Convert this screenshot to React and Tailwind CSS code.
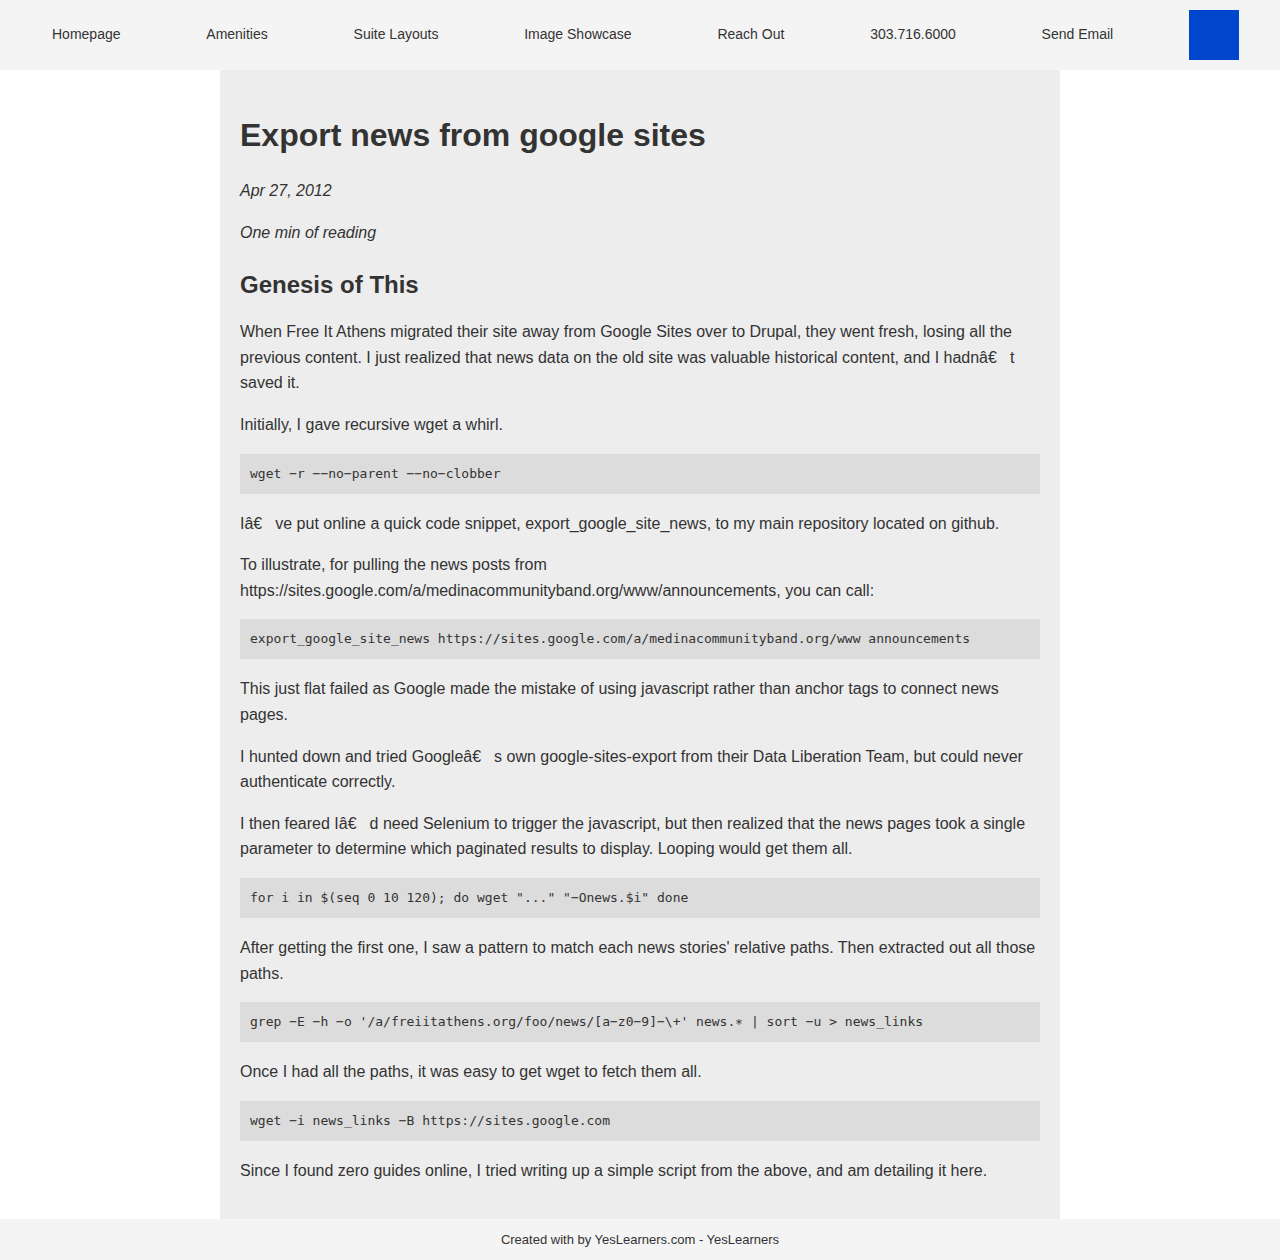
const NAV = ["Homepage", "Amenities", "Suite Layouts", "Image Showcase", "Reach Out", "303.716.6000", "Send Email"]

// the source page has mis-decoded apostrophes; keep them as they appear
const GAP = <span className="inline-block w-[13px]" />

function Code({ children }) {
  return (
    <pre className="mb-[17px] bg-[#dcdcdc] px-[10px] py-[10px] font-['DejaVu_Sans_Mono',monospace] text-[13px] leading-[20px] text-[#333] whitespace-pre">
      {children}
    </pre>
  )
}

function P({ children, className = "" }) {
  return <p className={`mb-4 text-[16px] leading-[25.6px] ${className}`}>{children}</p>
}

export default function App() {
  return (
    <div className="flex min-h-[1260px] flex-col bg-white font-['Liberation_Sans',Arial,sans-serif] text-[#333]">

      {/* Header */}
      <header className="flex h-[70px] items-center bg-[#f4f4f4] pl-[52px]">
        <nav className="mb-[2px] flex items-center gap-[85.8px] text-[14px]">
          {NAV.map((item) => (
            <a key={item} href="#" className="text-[#333]">{item}</a>
          ))}
        </nav>
        <div className="ml-[76px] h-[50px] w-[50px] bg-[#0046cc]" />
      </header>

      {/* Article */}
      <main className="mx-auto w-[840px] flex-1 bg-[#ededed] px-5 pt-[44px] pb-5">
        <h1 className="mb-[21px] text-[32px] font-bold leading-[43px]">Export news from google sites</h1>

        <P className="italic">Apr 27, 2012</P>
        <P className="italic">One min of reading</P>

        <h2 className="mt-[25px] mb-5 text-[24px] font-bold leading-[29px]">Genesis of This</h2>

        <P>
          When Free It Athens migrated their site away from Google Sites over to Drupal, they went fresh, losing all the
          previous content. I just realized that news data on the old site was valuable historical content, and I hadnâ€{GAP}t
          saved it.
        </P>
        <P>Initially, I gave recursive wget a whirl.</P>
        <Code>wget −r −−no−parent −−no−clobber</Code>

        <P>Iâ€{GAP}ve put online a quick code snippet, export_google_site_news, to my main repository located on github.</P>
        <P>
          To illustrate, for pulling the news posts from
          https://sites.google.com/a/medinacommunityband.org/www/announcements, you can call:
        </P>
        <Code>export_google_site_news https://sites.google.com/a/medinacommunityband.org/www announcements</Code>

        <P>This just flat failed as Google made the mistake of using javascript rather than anchor tags to connect news pages.</P>
        <P>I hunted down and tried Googleâ€{GAP}s own google-sites-export from their Data Liberation Team, but could never authenticate correctly.</P>
        <P>
          I then feared Iâ€{GAP}d need Selenium to trigger the javascript, but then realized that the news pages took a single
          parameter to determine which paginated results to display. Looping would get them all.
        </P>
        <Code>for i in $(seq 0 10 120); do wget "..." "−Onews.$i" done</Code>

        <P>After getting the first one, I saw a pattern to match each news stories' relative paths. Then extracted out all those paths.</P>
        <Code>grep −E −h −o '/a/freiitathens.org/foo/news/[a−z0−9]−\+' news.∗ | sort −u &gt; news_links</Code>

        <P>Once I had all the paths, it was easy to get wget to fetch them all.</P>
        <Code>wget −i news_links −B https://sites.google.com</Code>

        <P>Since I found zero guides online, I tried writing up a simple script from the above, and am detailing it here.</P>
      </main>

      {/* Footer */}
      <footer className="bg-[#f4f4f4] py-[10px] text-center text-[13px] leading-[21px] text-[#333]">
        Created with by YesLearners.com - YesLearners
      </footer>
    </div>
  )
}
